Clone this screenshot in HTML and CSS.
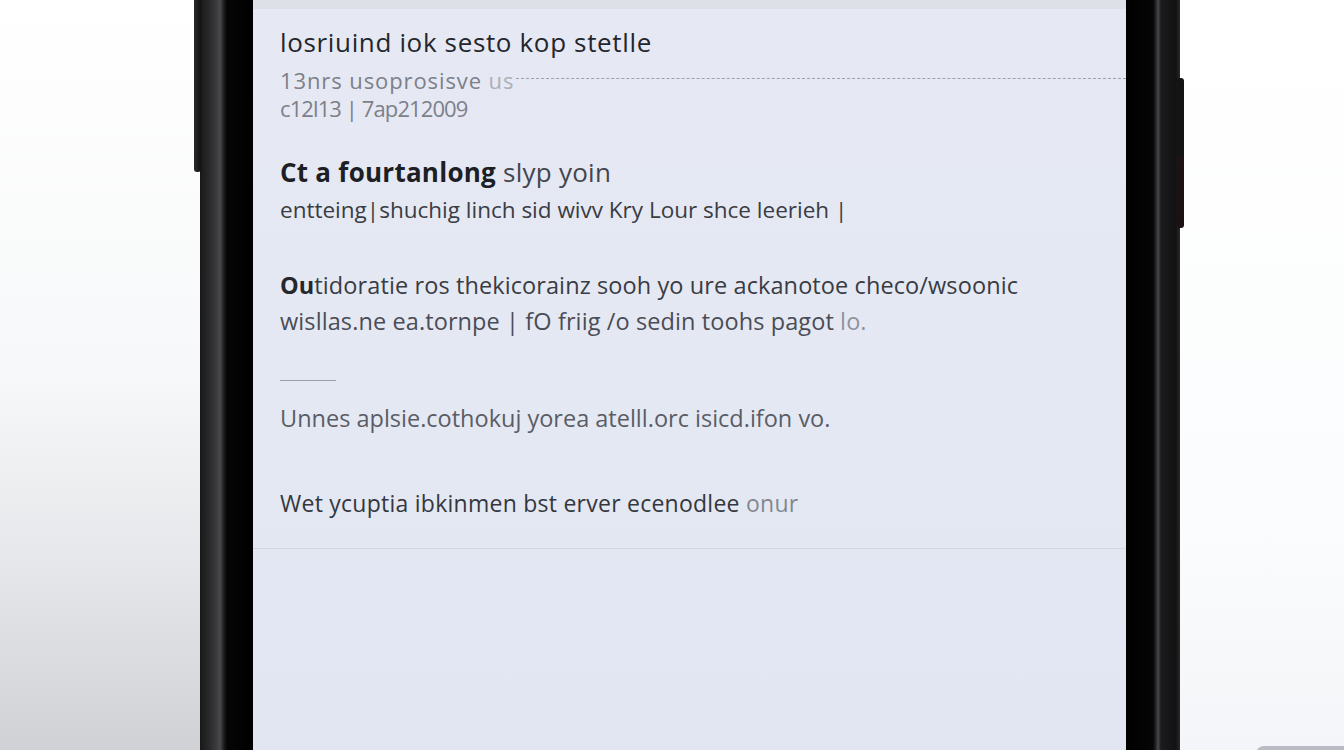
FILE: index.html
```html
<!DOCTYPE html>
<html lang="en">
<head>
    <meta charset="UTF-8">
    <meta name="viewport" content="width=device-width, initial-scale=1.0">
    <title>Phone</title>
    <link rel="stylesheet" href="styles.css">
</head>
<body>
    <div class="backdrop left-side"></div>

    <div class="phone">
        <div class="bezel bezel-left">
            <span class="side-btn btn-left"></span>
        </div>

        <div class="screen">
            <div class="status-strip"></div>

            <div class="block head-block">
                <h1 class="title">losriuind iok sesto kop stetlle</h1>
                <div class="meta-row">
                    <span class="meta meta-wide">13nrs usoprosisve <span class="fade">us</span></span>
                    <span class="rule"></span>
                </div>
                <div class="meta meta-tight">c12l13 | 7ap212009</div>
            </div>

            <div class="block">
                <p class="lead"><b>Ct a fourtanlong</b> slyp yoin</p>
                <p class="body-text wide">entteing|shuchig linch sid wivv Kry Lour shce leerieh |</p>
            </div>

            <div class="block narrow">
                <p class="body-text"><b>Ou</b>tidoratie ros thekicorainz sooh yo ure ackanotoe checo/wsoonic</p>
                <p class="body-text faded">wisllas.ne ea.tornpe | fO friig /o sedin toohs pagot <span class="fade">lo.</span></p>
            </div>

            <div class="dash"></div>

            <p class="body-text muted">Unnes aplsie.cothokuj yorea atelll.orc isicd.ifon vo.</p>

            <p class="body-text last">Wet ycuptia ibkinmen bst erver ecenodlee <span class="fade">onur</span></p>

            <div class="divider"></div>
        </div>

        <div class="bezel bezel-right">
            <span class="side-btn btn-right"></span>
        </div>
    </div>

    <div class="backdrop right-side">
        <span class="stand"></span>
    </div>
</body>
</html>
```

FILE: styles.css
```css
* {
    margin: 0;
    padding: 0;
    box-sizing: border-box;
}

body {
    font-family: 'Open Sans', 'Liberation Sans', sans-serif;
    width: 1344px;
    height: 750px;
    overflow: hidden;
    display: flex;
    background: #fdfdfe;
}

.backdrop {
    height: 100%;
}

.left-side {
    width: 200px;
    background: linear-gradient(to bottom, #ffffff 0%, #f7f8f9 50%, #e6e7ea 75%, #d0d1d5 100%);
}

.right-side {
    flex: 1;
    position: relative;
    background: linear-gradient(to bottom, #ffffff 0%, #fbfcfd 70%, #f3f5f8 100%);
}

.stand {
    position: absolute;
    left: 76px;
    bottom: -8px;
    width: 120px;
    height: 12px;
    border-radius: 8px 8px 0 0;
    background: #b9bcc2;
}

.phone {
    display: flex;
    height: 100%;
}

.bezel {
    position: relative;
    height: 100%;
}

.bezel-left {
    width: 53px;
    background: linear-gradient(to right, #181819 0, #2b2b2d 10px, #3d3d40 17px, #4a4a4d 20px, #1c1c1e 24px, #050505 27px, #000 100%);
}

.bezel-right {
    width: 54px;
    background: linear-gradient(to right, #000 0, #050505 27px, #262628 30px, #4a4a4d 32px, #1b1b1d 35px, #121213 50px, #2a2a2c 54px);
}

.side-btn {
    position: absolute;
    z-index: 2;
    width: 7px;
    border-radius: 3px;
}

.btn-left {
    left: -6px;
    top: -4px;
    height: 176px;
    background: linear-gradient(to right, #2a2a2c, #111);
}

.btn-right {
    right: -4px;
    top: 78px;
    height: 150px;
    background: linear-gradient(to bottom, #141414 0, #141414 50%, #1d1314 52%, #1a1112 100%);
}

.screen {
    width: 873px;
    height: 100%;
    background: linear-gradient(to bottom, #e6e9f3, #e4e8f3 60%, #e2e6f2);
    display: flex;
    flex-direction: column;
    padding: 0 0 0 27px;
}

.status-strip {
    height: 9px;
    margin-left: -27px;
    background: #dde0e7;
}

.block {
    display: flex;
    flex-direction: column;
}

.head-block {
    padding-top: 16px;
}

.title {
    font-size: 26px;
    font-weight: 500;
    color: #24262c;
    line-height: 34px;
    letter-spacing: 0.65px;
    margin-bottom: 7px;
}

.meta-row {
    display: flex;
    align-items: center;
    gap: 2px;
}

.meta {
    font-size: 22px;
    color: #7c8089;
    line-height: 28px;
}

.meta-wide {
    letter-spacing: 0.9px;
}

.meta-tight {
    letter-spacing: -0.9px;
}

.fade {
    opacity: 0.55;
}

.rule {
    flex: 1;
    border-top: 1px dashed #9da1aa;
    margin-top: -4px;
}

.lead {
    margin-top: 34px;
    margin-bottom: 4px;
    font-size: 26px;
    color: #43464d;
    line-height: 32px;
    letter-spacing: 0.25px;
}

.lead b {
    font-weight: 700;
    color: #1d1f25;
}

.body-text {
    font-size: 23.5px;
    color: #393c43;
    line-height: 36px;
}

.body-text.wide {
    font-size: 22.5px;
}

.block.narrow {
    margin-top: 39px;
}

.block.narrow .body-text {
    letter-spacing: 0.1px;
}

.body-text b {
    font-weight: 700;
    color: #25272d;
}

.faded {
    color: #4a4d55;
}

.dash {
    width: 56px;
    border-top: 1px solid #9b9ea6;
    margin-top: 41px;
}

.muted {
    margin-top: 19px;
    color: #5a5d65;
}

.last {
    margin-top: 49px;
    font-size: 23px;
    letter-spacing: 0.25px;
    color: #34373d;
}

.divider {
    margin-top: 27px;
    margin-left: -27px;
    border-top: 1px solid #d3d6df;
}
```
